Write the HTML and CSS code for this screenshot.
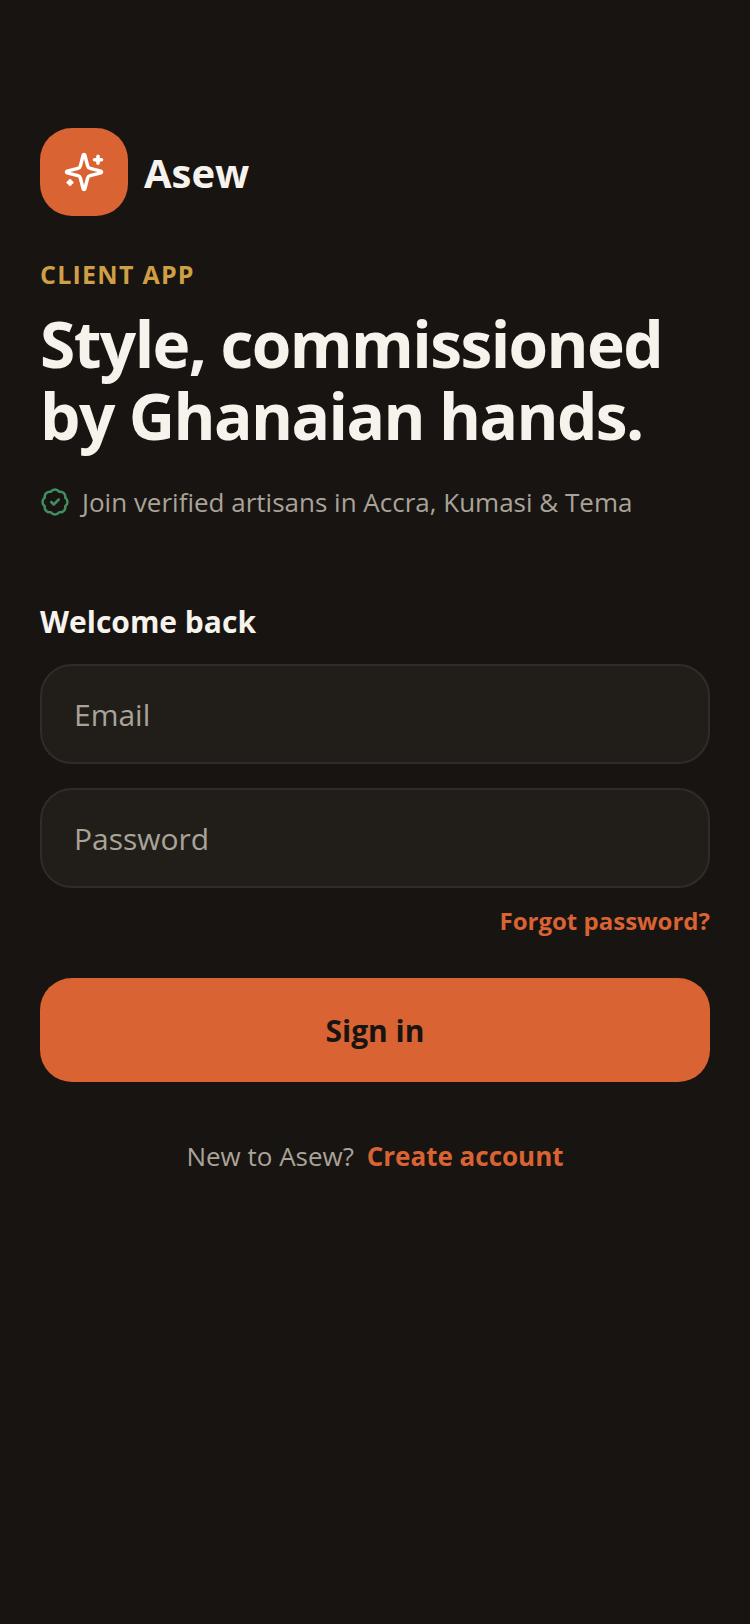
FILE: index.html
```html
<!DOCTYPE html>
<html lang="en">
<head>
    <meta charset="UTF-8">
    <meta name="viewport" content="width=device-width, initial-scale=1.0">
    <title>Asew</title>
    <link rel="stylesheet" href="styles.css">
</head>
<body>
    <div class="container">
        <div class="brand">
            <div class="brand-icon">
                <svg width="42" height="42" viewBox="0 0 24 24" fill="none" stroke="#fff" stroke-width="2" stroke-linecap="round" stroke-linejoin="round">
                    <path d="M9.94 15.5A2 2 0 0 0 8.5 14.06l-6.14-1.58a.5.5 0 0 1 0-.96L8.5 9.94A2 2 0 0 0 9.94 8.5l1.58-6.14a.5.5 0 0 1 .96 0L14.06 8.5A2 2 0 0 0 15.5 9.94l6.14 1.58a.5.5 0 0 1 0 .96L15.5 14.06a2 2 0 0 0-1.44 1.44l-1.58 6.14a.5.5 0 0 1-.96 0z"/>
                    <path d="M20 3v4"/>
                    <path d="M22 5h-4"/>
                    <path d="M4 17v2"/>
                    <path d="M5 18H3"/>
                </svg>
            </div>
            <span class="brand-name">Asew</span>
        </div>
        <div class="eyebrow">CLIENT APP</div>
        <h1 class="title">Style, commissioned by Ghanaian hands.</h1>
        <div class="verified">
            <svg width="30" height="30" viewBox="0 0 24 24" fill="none" stroke="#3f8f5f" stroke-width="2" stroke-linecap="round" stroke-linejoin="round">
                <path d="M3.85 8.62a4 4 0 0 1 4.78-4.77 4 4 0 0 1 6.74 0 4 4 0 0 1 4.78 4.78 4 4 0 0 1 0 6.74 4 4 0 0 1-4.77 4.78 4 4 0 0 1-6.75 0 4 4 0 0 1-4.78-4.77 4 4 0 0 1 0-6.76Z"/>
                <path d="m9 12 2 2 4-4"/>
            </svg>
            <span>Join verified artisans in Accra, Kumasi &amp; Tema</span>
        </div>
        <form class="form">
            <h2 class="form-title">Welcome back</h2>
            <input class="field" type="email" placeholder="Email">
            <input class="field" type="password" placeholder="Password">
            <a class="forgot" href="#">Forgot password?</a>
            <button type="button" class="btn">Sign in</button>
        </form>
        <div class="signup">New to Asew? <a href="#">Create account</a></div>
    </div>
</body>
</html>
```

FILE: styles.css
```css
* {
    box-sizing: border-box;
    margin: 0;
    padding: 0;
    font-family: "Open Sans", Arial, sans-serif;
}
body {
    min-height: 100vh;
    background-color: #181412;
    color: #f6f2ec;
    overflow: hidden;
}
.container {
    padding: 128px 40px 0;
}
.brand {
    display: flex;
    align-items: center;
    gap: 16px;
}
.brand-icon {
    width: 88px;
    height: 88px;
    border-radius: 32px;
    background: #d96333;
    display: flex;
    align-items: center;
    justify-content: center;
}
.brand-name {
    font-size: 40px;
    font-weight: 700;
}
.eyebrow {
    margin-top: 40px;
    font-size: 25px;
    line-height: 36px;
    font-weight: 700;
    letter-spacing: 1.25px;
    color: #cf9f45;
}
.title {
    margin-top: 16px;
    font-size: 64px;
    line-height: 72px;
    font-weight: 700;
    letter-spacing: -1.6px;
}
.verified {
    display: flex;
    align-items: center;
    gap: 12px;
    margin-top: 32px;
    font-size: 26px;
    line-height: 36px;
    color: #a9a398;
}
.form {
    display: flex;
    flex-direction: column;
    margin-top: 82px;
}
.form-title {
    font-size: 30px;
    line-height: 40px;
    font-weight: 700;
    margin-bottom: 22px;
}
.field {
    height: 100px;
    padding: 0 32px;
    border: 2px solid #302c28;
    border-radius: 32px;
    background: #211e1a;
    font-size: 30px;
    color: #f6f2ec;
    margin-bottom: 24px;
    outline: none;
}
.field::placeholder {
    color: #a9a398;
    opacity: 1;
}
.forgot {
    align-self: flex-end;
    margin-top: -8px;
    font-size: 24px;
    line-height: 34px;
    font-weight: 700;
    color: #d96333;
    text-decoration: none;
}
.btn {
    height: 104px;
    margin-top: 40px;
    border: none;
    border-radius: 32px;
    background: #d96333;
    color: #181412;
    font-size: 30px;
    font-weight: 700;
}
.signup {
    margin-top: 56px;
    text-align: center;
    font-size: 26px;
    line-height: 36px;
    color: #a9a398;
}
.signup a {
    margin-left: 6px;
    font-weight: 700;
    color: #d96333;
    text-decoration: none;
}
```
